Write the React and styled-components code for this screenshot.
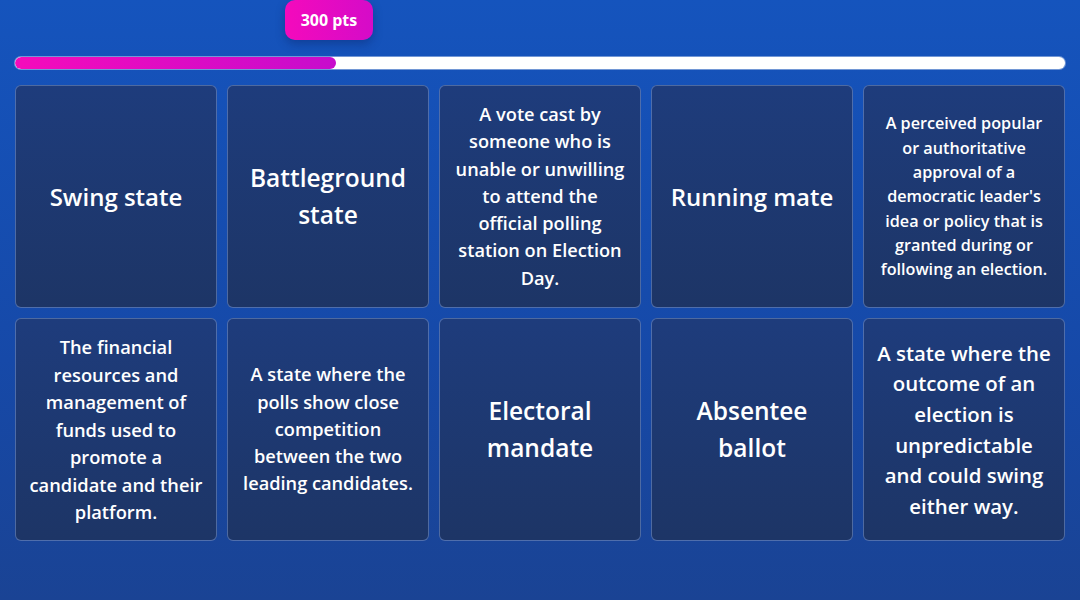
import React from "react"
import styled, { createGlobalStyle } from "styled-components"

const GlobalStyle = createGlobalStyle`
  html, body {
    margin: 0;
    padding: 0;
  }
  body {
    font-family: "Open Sans", "Noto Sans", sans-serif;
    background: linear-gradient(180deg, #1554bd 0%, #1649a8 60%, #1a4394 100%);
    min-height: 600px;
  }
`

const Page = styled.div`
  width: 1080px;
  height: 600px;
  padding: 0 15px;
  box-sizing: border-box;
`

const Header = styled.div`
  position: relative;
  height: 57px;
`

const Score = styled.div`
  position: absolute;
  top: 0;
  transform: translateX(-50%);
  width: 88px;
  height: 40px;
  border-radius: 10px;
  background: linear-gradient(90deg, #f40abc 0%, #d50bc8 100%);
  box-shadow: 0 4px 10px rgba(10, 30, 90, 0.35);
  color: #fff;
  font-weight: 700;
  font-size: 16px;
  display: flex;
  align-items: center;
  justify-content: center;
`

const Track = styled.div`
  height: 12px;
  border-radius: 6px;
  background: #fff;
  overflow: hidden;
  box-shadow: 0 0 0 1px rgba(255, 255, 255, 0.4);
`

const Fill = styled.div`
  height: 100%;
  border-radius: 6px;
  background: linear-gradient(90deg, #f50bbb 0%, #c70ccc 100%);
`

const Grid = styled.div`
  margin-top: 16px;
  display: grid;
  grid-template-columns: repeat(5, 1fr);
  grid-template-rows: repeat(2, 223px);
  gap: 10px 10px;
`

const Card = styled.div`
  box-sizing: border-box;
  border: 1px solid rgba(140, 170, 230, 0.45);
  border-radius: 6px;
  background: linear-gradient(180deg, #1e3c7c 0%, #1d3566 100%);
  padding: 8px 13px;
  display: flex;
  align-items: center;
  justify-content: center;
  text-align: center;
  color: #fff;
  font-weight: 600;
  font-size: ${(p) => p.$size}px;
  line-height: 1.5;
`

const cards = [
  { text: "Swing state", size: 24 },
  { text: "Battleground state", size: 24.5 },
  { text: "A vote cast by someone who is unable or unwilling to attend the official polling station on Election Day.", size: 18.2 },
  { text: "Running mate", size: 24 },
  { text: "A perceived popular or authoritative approval of a democratic leader's idea or policy that is granted during or following an election.", size: 16.2 },
  { text: "The financial resources and management of funds used to promote a candidate and their platform.", size: 18.3 },
  { text: "A state where the polls show close competition between the two leading candidates.", size: 18.2 },
  { text: "Electoral mandate", size: 24.5 },
  { text: "Absentee ballot", size: 24.5 },
  { text: "A state where the outcome of an election is unpredictable and could swing either way.", size: 20.4 },
]

export default function App() {
  const progress = 30.6
  return (
    <>
      <GlobalStyle />
      <Page>
        <Header>
          <Score style={{ left: `${progress - 0.7}%` }}>300 pts</Score>
        </Header>
        <Track>
          <Fill style={{ width: `${progress}%` }} />
        </Track>
        <Grid>
          {cards.map((c, i) => (
            <Card key={i} $size={c.size}>
              {c.text}
            </Card>
          ))}
        </Grid>
      </Page>
    </>
  )
}
